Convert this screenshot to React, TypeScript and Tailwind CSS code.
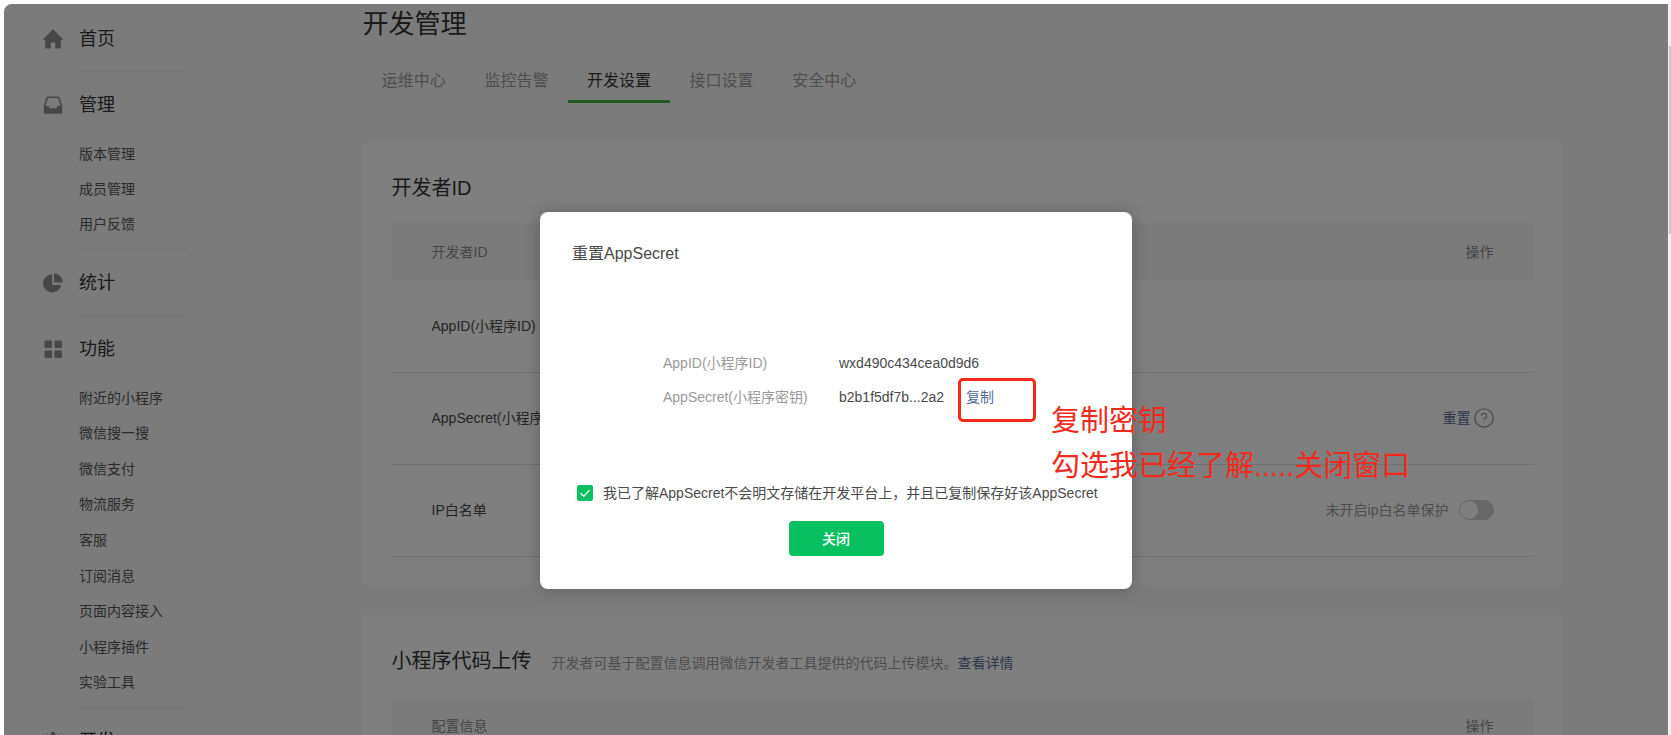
import type { ReactNode } from "react";
import { CircleHelp } from "lucide-react";

const tabs = ["运维中心", "监控告警", "开发设置", "接口设置", "安全中心"];

type Section = { title: string; icon: ReactNode; items?: string[] };

const sections: Section[] = [
  {
    title: "首页",
    icon: (
      <path d="M10 0.3 20 10.2 18.8 11.3H17.8V19.6H12.2V13.6H7.8V19.6H2.2V11.3H1.2L0 10.2Z" />
    ),
  },
  {
    title: "管理",
    icon: (
      <path
        fillRule="evenodd"
        d="M4.6 1.5H15.4Q16.2 1.5 16.5 2.3L19.2 10.5V17.5Q19.2 18.7 18 18.7H2Q0.8 18.7 0.8 17.5V10.5L3.5 2.3Q3.8 1.5 4.6 1.5ZM5 2.9 2.5 11H6V13.3H14V11H17.5L15 2.9Z"
      />
    ),
    items: ["版本管理", "成员管理", "用户反馈"],
  },
  {
    title: "统计",
    icon: (
      <>
        <path d="M9.2 1.2A9.2 9.2 0 1 0 18.3 12H9.2Z" />
        <path d="M11 0.3A9 9 0 0 1 19.8 9.6H11Z" />
      </>
    ),
  },
  {
    title: "功能",
    icon: (
      <>
        <rect x="1.5" y="1.5" width="7.5" height="7.5" rx="1" />
        <rect x="11.5" y="1.5" width="7.5" height="7.5" rx="1" />
        <rect x="1.5" y="11.5" width="7.5" height="7.5" rx="1" />
        <rect x="11.5" y="11.5" width="7.5" height="7.5" rx="1" />
      </>
    ),
    items: [
      "附近的小程序",
      "微信搜一搜",
      "微信支付",
      "物流服务",
      "客服",
      "订阅消息",
      "页面内容接入",
      "小程序插件",
      "实验工具",
    ],
  },
  {
    title: "开发",
    icon: (
      <path
        fillRule="evenodd"
        d="M8.5 1h3l.6 2.4 1.8.8L16 3l2 2-1.2 2.1.8 1.8 2.4.6v3l-2.4.6-.8 1.8L18 17l-2 2-2.1-1.2-1.8.8-.6 2.4h-3l-.6-2.4-1.8-.8L4 19l-2-2 1.2-2.1-.8-1.8L0 12.5v-3l2.4-.6.8-1.8L2 5l2-2 2.1 1.2 1.8-.8ZM10 8a3 3 0 1 0 0 6 3 3 0 0 0 0-6Z"
      />
    ),
  },
];

function Sidebar() {
  return (
    <nav className="w-[253px] shrink-0 border-r border-[#eeeeee] pt-[2px]">
      {sections.map((section, i) => (
        <div key={section.title}>
          {i > 0 && <div className="ml-[75px] h-px w-[109px] bg-[#e8e8e8]" />}
          <a href="#" className="flex h-[65px] items-center gap-4 pt-px pl-[39px] text-lg text-[#353535]">
            <svg viewBox="0 0 20 20" className="h-5 w-5 fill-[#8e8e8e]" aria-hidden="true">
              {section.icon}
            </svg>
            {section.title}
          </a>
          {section.items && (
            <ul
              className={
                section.items.length > 3
                  ? "-mt-px mb-[7px] grid h-[320px] auto-rows-fr pl-[75px]"
                  : "-mt-px mb-[7px] grid h-[106px] auto-rows-fr pl-[75px]"
              }
            >
              {section.items.map((item) => (
                <li key={item} className="flex items-center">
                  <a href="#" className="text-sm text-[#555555]">
                    {item}
                  </a>
                </li>
              ))}
            </ul>
          )}
        </div>
      ))}
    </nav>
  );
}

function TableHead({ label }: { label: string }) {
  return (
    <thead>
      <tr className="h-[57px] bg-[#f6f6f6] text-[#8a8a8a]">
        <th className="px-10 text-left font-normal">{label}</th>
        <th className="px-10 text-right font-normal">操作</th>
      </tr>
    </thead>
  );
}

function DeveloperCard() {
  return (
    <section className="rounded bg-white px-[29px] pb-[29px]">
      <h2 className="pt-8 pb-[21px] text-xl leading-7 text-[#353535]">开发者ID</h2>
      <table className="w-full text-sm text-[#4a4a4a]">
        <TableHead label="开发者ID" />
        <tbody>
          <tr className="h-[92px] border-b border-[#e0e0e0]">
            <td className="px-10">AppID(小程序ID)</td>
            <td />
          </tr>
          <tr className="h-[92px] border-b border-[#e0e0e0]">
            <td className="px-10">AppSecret(小程序密钥)</td>
            <td className="px-10">
              <div className="flex items-center justify-end gap-[2px]">
                <a href="#" className="text-[#576b95]">重置</a>
                <CircleHelp className="-mr-px h-[22px] w-[22px] text-[#9a9a9a]" strokeWidth={1.4} />
              </div>
            </td>
          </tr>
          <tr className="h-[92px] border-b border-[#e0e0e0]">
            <td className="px-10">IP白名单</td>
            <td className="px-10">
              <label className="flex items-center justify-end gap-[10px] text-[#9a9a9a]">
                未开启ip白名单保护
                <input
                  type="checkbox"
                  role="switch"
                  className="h-5 w-[35px] appearance-none rounded-full border border-[#cfcfcf] bg-[#cfcfcf] before:block before:h-[18px] before:w-[18px] before:rounded-full before:bg-white checked:before:ml-auto"
                />
              </label>
            </td>
          </tr>
        </tbody>
      </table>
    </section>
  );
}

function UploadCard() {
  return (
    <section className="mt-[29px] rounded bg-white px-[29px] pb-[29px]">
      <div className="flex items-baseline gap-5 pt-8 pb-[23px]">
        <h2 className="text-xl leading-7 text-[#353535]">小程序代码上传</h2>
        <p className="text-sm text-[#9a9a9a]">
          开发者可基于配置信息调用微信开发者工具提供的代码上传模块。
          <a href="#" className="text-[#576b95]">查看详情</a>
        </p>
      </div>
      <table className="w-full text-sm">
        <TableHead label="配置信息" />
      </table>
    </section>
  );
}

function ResetDialog() {
  return (
    <div
      role="dialog"
      aria-labelledby="reset-title"
      className="relative w-[592px] rounded-lg bg-white px-8 pt-[30px] pb-[33px] text-sm text-[#4a4a4a] shadow-[0_0_16px_rgba(0,0,0,0.25)]"
    >
      <h3 id="reset-title" className="text-base leading-6">重置AppSecret</h3>

      <dl className="mt-20 ml-[91px] grid auto-rows-[34px] grid-cols-[176px_1fr] items-center">
        <dt className="text-[#9a9a9a]">AppID(小程序ID)</dt>
        <dd>wxd490c434cea0d9d6</dd>
        <dt className="text-[#9a9a9a]">AppSecret(小程序密钥)</dt>
        <dd className="flex items-center gap-[22px]">
          b2b1f5df7b...2a2
          <button type="button" className="relative text-[#576b95]">
            复制
            {/* red marker around the copy link */}
            <span className="absolute -top-[9px] -left-2 h-[44px] w-[78px] rounded-[5px] border-[3px] border-[#f5291b]" />
          </button>
        </dd>
      </dl>

      <label className="mt-[67px] ml-[5px] flex h-6 items-center gap-[10px] whitespace-nowrap">
        <span className="relative h-4 w-4">
          <input
            type="checkbox"
            defaultChecked
            className="peer block h-4 w-4 appearance-none rounded-[2px] border border-[#07c160] checked:bg-[#07c160]"
          />
          <svg
            viewBox="0 0 16 16"
            className="pointer-events-none absolute inset-0 hidden fill-none stroke-white peer-checked:block"
            aria-hidden="true"
          >
            <path d="M3.5 8.2 6.8 11.3 12.5 5.2" strokeWidth="1.2" />
          </svg>
        </span>
        我已了解AppSecret不会明文存储在开发平台上，并且已复制保存好该AppSecret
      </label>

      <button
        type="button"
        className="mx-auto mt-4 block h-[35px] w-[95px] rounded bg-[#07c160] font-medium text-white"
      >
        关闭
      </button>

      {/* red note next to the dialog */}
      <p className="absolute top-[187px] left-[511px] text-[29px] leading-[45px] whitespace-nowrap text-[#f5291b]">
        复制密钥
        <br />
        勾选我已经了解.....关闭窗口
      </p>
    </div>
  );
}

export default function App() {
  return (
    <div className="flex h-screen overflow-hidden bg-white pt-1 pl-1 font-['Liberation_Sans','Noto_Sans_CJK_SC',sans-serif]">
      <div className="relative flex min-w-0 flex-1 overflow-hidden rounded-tl-lg bg-[#f6f6f6]">
        <Sidebar />
        <main className="min-w-0 flex-1">
          <div className="mx-auto max-w-[1200px]">
            <h1 className="text-[26px] leading-[40px] text-[#353535]">开发管理</h1>
            <div className="mt-3 mb-[39px] border-b border-[#f2f2f2]">
              <div role="tablist" className="-mb-px grid w-[513px] grid-cols-5">
                {tabs.map((tab) => (
                  <button
                    key={tab}
                    type="button"
                    role="tab"
                    aria-selected={tab === "开发设置"}
                    className={
                      tab === "开发设置"
                        ? "h-[47px] border-b-[3px] border-[#44b549] pt-[6px] text-base text-[#353535]"
                        : "h-[47px] border-b-[3px] border-transparent pt-[6px] text-base text-[#9a9a9a]"
                    }
                  >
                    {tab}
                  </button>
                ))}
              </div>
            </div>
            <DeveloperCard />
            <UploadCard />
          </div>
        </main>

        <div className="absolute inset-0 bg-black/50" />
        <div className="absolute inset-0 flex items-start justify-center pt-52">
          <ResetDialog />
        </div>
      </div>

      {/* scrollbar gutter */}
      <div className="w-[3px] shrink-0 bg-[#f1f1f1] pt-[42px] pl-px">
        <div className="h-[188px] bg-[#c8c8c8]" />
      </div>
    </div>
  );
}
